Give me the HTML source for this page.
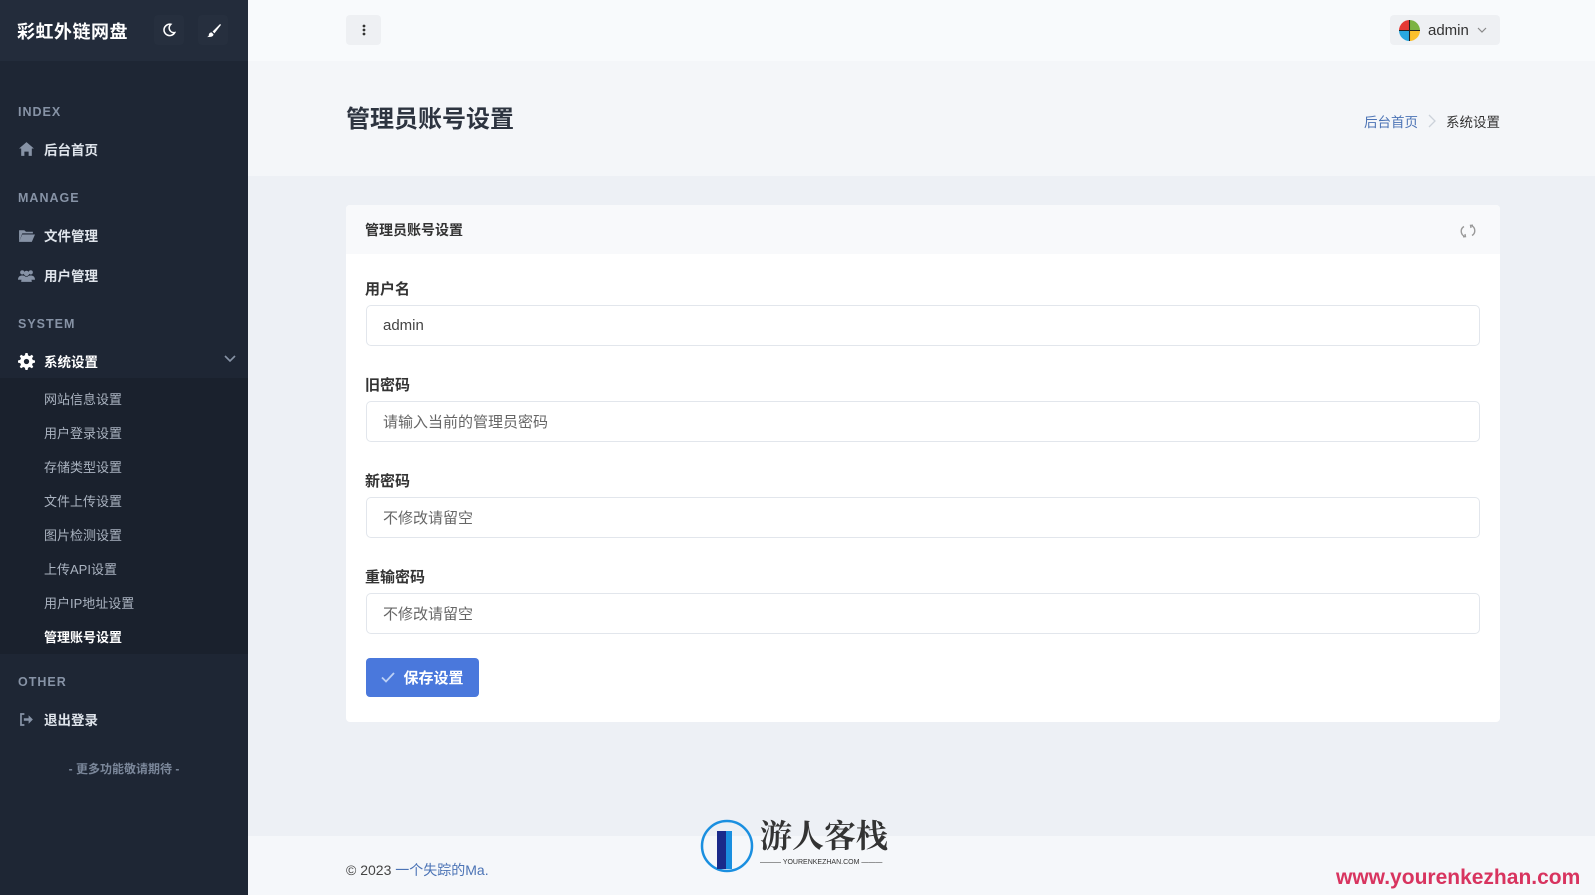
<!DOCTYPE html>
<html><head><meta charset="utf-8"><style>
*{margin:0;padding:0;box-sizing:border-box}
body{width:1595px;height:895px;overflow:hidden;font-family:"Liberation Sans","Noto Sans CJK SC",sans-serif;background:#edf0f5;position:relative;color:#333}
.sb{position:absolute;left:0;top:0;width:248px;height:895px;background:#1e2634}
.sbtop{position:absolute;left:0;top:0;width:248px;height:61px;background:#232c3b}
.abs{position:absolute}
.logo{left:17px;top:18px;color:#fff;font-size:18px;font-weight:bold;letter-spacing:0.5px}
.ib{width:30px;height:30px;top:15px;background:#262f3e;border-radius:4px;color:#fff;display:flex;align-items:center;justify-content:center}
.sec{left:18px;font-size:12.5px;font-weight:bold;color:#8793a6;letter-spacing:1px}
.it{left:18px;font-size:13.5px;font-weight:bold;color:#dfe4eb;display:flex;align-items:center;gap:9px}
.it svg{width:17px;height:17px;fill:#8793a6}
.sub{position:absolute;left:0;top:378px;width:248px;height:276px;background:#1a212d}
.si{left:44px;font-size:13px;color:#aab3c0}
.top{position:absolute;left:248px;top:0;width:1347px;height:61px;background:#f8fafc}
.hdr{position:absolute;left:248px;top:61px;width:1347px;height:115px;background:#f4f6f9}
.card{position:absolute;left:346px;top:205px;width:1154px;height:517px;background:#fff;border-radius:4px}
.ch{height:49px;background:#f8f9fb;border-radius:4px 4px 0 0;padding:0 19px;display:flex;align-items:center;font-size:14px;font-weight:bold;color:#333}
.lb{left:365px;font-size:15px;font-weight:bold;color:#333}
.in{left:366px;width:1114px;height:41px;border:1px solid #e2e6ec;border-radius:5px;padding-left:16px;display:flex;align-items:center;font-size:15px;color:#666}
.foot{position:absolute;left:248px;top:836px;width:1347px;height:59px;background:#f5f7fa}
</style></head><body>
<div class="sb"></div><div class="sbtop"></div>
<div class="abs logo">彩虹外链网盘</div>
<div class="abs ib" style="left:154px"><svg width="14" height="14" viewBox="0 0 16 16"><path d="M10 1.5A6.5 6.5 0 1 0 14.5 11 5.5 5.5 0 0 1 10 1.5z" fill="none" stroke="#fff" stroke-width="1.8"/></svg></div>
<div class="abs ib" style="left:198px"><svg width="15" height="15" viewBox="0 0 16 16"><path d="M15 1 7 9l2 2 7-9zM6 10c-2 0-3 1.5-3 3 0 1-1 1.5-2 2 3 0 7 0 7-3z" fill="#fff"/></svg></div>
<div class="abs sec" style="top:105px">INDEX</div>
<div class="abs it" style="top:139px"><svg viewBox="0 0 16 16"><path d="M8 1 1 7h2v7h10V7h2zM6 14v-4h4v4z"/></svg>后台首页</div>
<div class="abs sec" style="top:191px">MANAGE</div>
<div class="abs it" style="top:225px"><svg viewBox="0 0 16 16"><path d="M1 3h5l1.5 1.5H14V6H4l-3 8zM4 7h12l-3 7H1z"/></svg>文件管理</div>
<div class="abs it" style="top:265px"><svg viewBox="0 0 16 16"><circle cx="4" cy="5" r="2"/><circle cx="12" cy="5" r="2"/><circle cx="8" cy="6" r="2.5"/><path d="M0 12c0-3 2-4 4-4s4 1 4 4zM8 12c0-3 2-4 4-4s4 1 4 4zM3 14c0-3 2-5 5-5s5 2 5 5z"/></svg>用户管理</div>
<div class="abs sec" style="top:317px">SYSTEM</div>
<div class="abs it" style="top:351px;color:#fff"><svg viewBox="0 0 16 16" style="fill:#fff"><path d="M7 0h2l.5 2.2 1.6.7 1.9-1.2 1.4 1.4-1.2 1.9.7 1.6L16 7v2l-2.1.5-.7 1.6 1.2 1.9-1.4 1.4-1.9-1.2-1.6.7L9 16H7l-.5-2.1-1.6-.7-1.9 1.2-1.4-1.4 1.2-1.9-.7-1.6L0 9V7l2.1-.5.7-1.6-1.2-1.9 1.4-1.4 1.9 1.2 1.6-.7zM8 5.5a2.5 2.5 0 1 0 0 5 2.5 2.5 0 0 0 0-5z"/></svg>系统设置</div>
<svg class="abs" style="left:224px;top:355px" width="12" height="8" viewBox="0 0 12 8"><path d="M1 1l5 5 5-5" fill="none" stroke="#8793a6" stroke-width="1.6"/></svg>
<div class="sub"></div>
<div class="abs si" style="top:389px">网站信息设置</div>
<div class="abs si" style="top:423px">用户登录设置</div>
<div class="abs si" style="top:457px">存储类型设置</div>
<div class="abs si" style="top:491px">文件上传设置</div>
<div class="abs si" style="top:525px">图片检测设置</div>
<div class="abs si" style="top:559px">上传API设置</div>
<div class="abs si" style="top:593px">用户IP地址设置</div>
<div class="abs si" style="top:627px;color:#fff;font-weight:bold">管理账号设置</div>
<div class="abs sec" style="top:675px">OTHER</div>
<div class="abs it" style="top:709px"><svg viewBox="0 0 16 16"><path d="M6 2H2v12h4v-1.6H3.6V3.6H6zM10 4l4 4-4 4V9.2H5.5V6.8H10z"/></svg>退出登录</div>
<div class="abs" style="left:0;width:248px;top:760px;text-align:center;font-size:12px;color:#7b879a;font-weight:bold">- 更多功能敬请期待 -</div>

<div class="top"></div>
<div class="abs" style="left:346px;top:15px;width:35px;height:30px;background:#eef0f3;border-radius:4px;display:flex;align-items:center;justify-content:center"><svg width="4" height="12"><circle cx="2" cy="2" r="1.4" fill="#333"/><circle cx="2" cy="6" r="1.4" fill="#333"/><circle cx="2" cy="10" r="1.4" fill="#333"/></svg></div>
<div class="abs" style="left:1390px;top:15px;width:110px;height:30px;background:#eef0f3;border-radius:4px;display:flex;align-items:center;padding-left:9px;gap:8px;font-size:15px;color:#333">
<svg width="21" height="21" viewBox="0 0 20 20"><path d="M10 10V0A10 10 0 0 0 0 10z" fill="#e53935"/><path d="M10 10V0a10 10 0 0 1 10 10z" fill="#7cb342"/><path d="M10 10H0a10 10 0 0 0 10 10z" fill="#29a8e0"/><path d="M10 10h10a10 10 0 0 1-10 10z" fill="#fbc02d"/><path d="M10 0v20M0 10h20" stroke="#222" stroke-width="1"/></svg>admin<svg width="10" height="6" viewBox="0 0 10 6"><path d="M1 1l4 4 4-4" fill="none" stroke="#888" stroke-width="1.2"/></svg></div>
<div class="hdr"></div>
<div class="abs" style="left:346px;top:99px;font-size:24px;font-weight:bold;color:#2d3440">管理员账号设置</div>
<div class="abs" style="right:95px;top:111px;font-size:13.5px;display:flex;gap:10px;align-items:center"><span style="color:#4b73b5">后台首页</span><svg width="8" height="14" viewBox="0 0 8 14"><path d="M1 1l6 6-6 6" fill="none" stroke="#ccd2da" stroke-width="1.3"/></svg><span style="color:#333">系统设置</span></div>

<div class="card"><div class="ch">管理员账号设置</div></div>
<svg class="abs" style="left:1460px;top:223px" width="16" height="16" viewBox="0 0 16 16"><path d="M4 3.5A5.5 5.5 0 0 0 5 13.5M12 12.5A5.5 5.5 0 0 0 11 2.5" fill="none" stroke="#999" stroke-width="1.4"/><path d="M3 13.8 5.5 13.6 5 11M13 2.2 10.5 2.4 11 5" fill="none" stroke="#999" stroke-width="1.3"/></svg>
<div class="abs lb" style="top:278px">用户名</div>
<div class="abs in" style="top:305px;color:#444">admin</div>
<div class="abs lb" style="top:374px">旧密码</div>
<div class="abs in" style="top:401px">请输入当前的管理员密码</div>
<div class="abs lb" style="top:470px">新密码</div>
<div class="abs in" style="top:497px">不修改请留空</div>
<div class="abs lb" style="top:566px">重输密码</div>
<div class="abs in" style="top:593px">不修改请留空</div>
<div class="abs" style="left:366px;top:658px;width:113px;height:39px;background:#4a78dc;border-radius:4px;color:#fff;font-weight:bold;font-size:15px;display:flex;align-items:center;justify-content:center;gap:8px"><svg width="14" height="11" viewBox="0 0 14 11"><path d="M1 5.5l4 4L13 1" fill="none" stroke="#bcd0f5" stroke-width="1.8"/></svg>保存设置</div>

<div class="foot"></div>
<div class="abs" style="left:346px;top:860px;font-size:14px;color:#444">© 2023 <span style="color:#4b73b5">一个失踪的Ma.</span></div>
<svg class="abs" style="left:700px;top:819px" width="54" height="54" viewBox="0 0 54 54"><circle cx="27" cy="27" r="25" fill="none" stroke="#1a8fe0" stroke-width="2.5"/><rect x="17" y="12" width="9" height="38" fill="#1a2a8a"/><rect x="26" y="12" width="6" height="38" fill="#1a8fe0"/></svg>
<div class="abs" style="left:760px;top:818px;font-family:'Noto Serif CJK SC',serif;font-size:32px;font-weight:bold;color:#333;line-height:1">游人客栈</div>
<div class="abs" style="left:760px;top:859px;font-size:7px;color:#333;white-space:nowrap">——— YOURENKEZHAN.COM ———</div>
<div class="abs" style="left:1336px;top:866px;font-size:21px;font-weight:bold;color:#d8345f">www.yourenkezhan.com</div>
</body></html>
